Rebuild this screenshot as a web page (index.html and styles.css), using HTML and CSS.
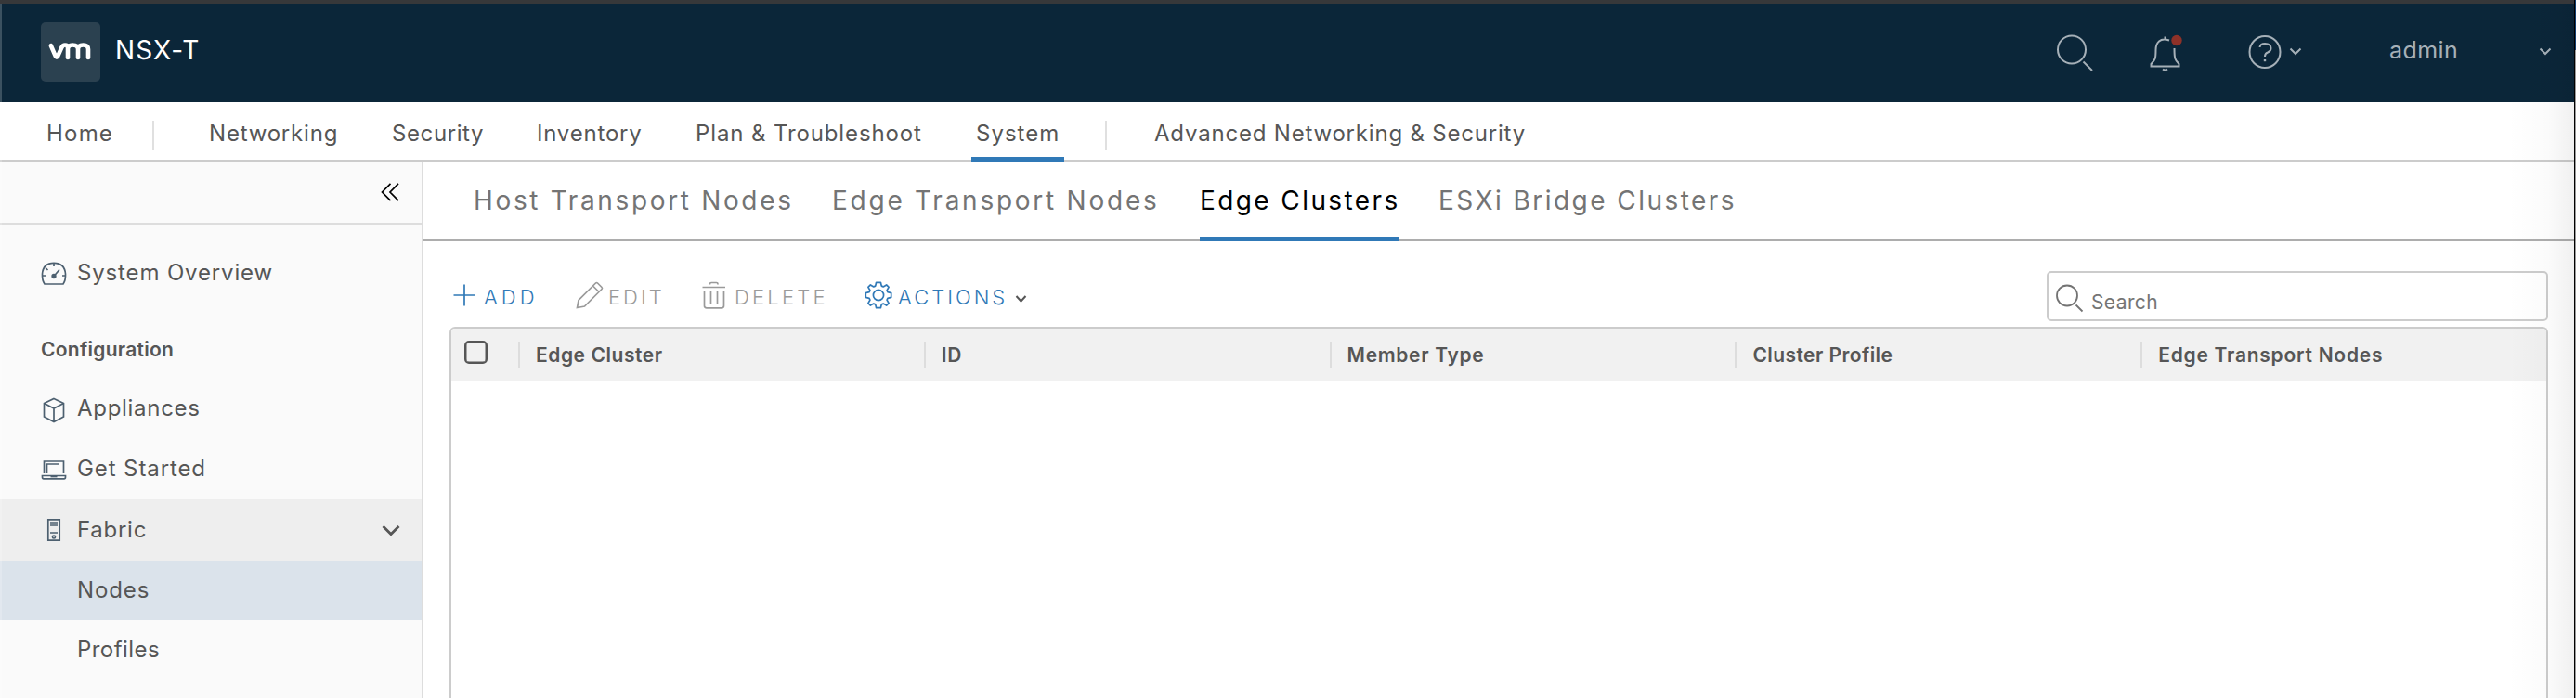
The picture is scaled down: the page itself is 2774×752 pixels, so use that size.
FILE: index.html
```html
<!DOCTYPE html>
<html lang="en">
<head>
<meta charset="utf-8">
<title>NSX-T</title>
<link rel="stylesheet" href="styles.css">
</head>
<body>
<div class="window">
  <header class="topbar">
    <div class="logo"><svg width="46" height="20" viewBox="0 0 46 20" fill="none" stroke="#fff" stroke-width="4.6" stroke-linecap="round" stroke-linejoin="round"><path d="M2.8 3.2L7.6 14.2Q9 17 10.4 14.2L14.2 5.5Q15.500 2.500 18 2.500Q21 2.500 21 6V16M21 6.500Q21 2.500 26 2.500Q32 2.500 32 7V16M32 7Q32 2.500 37.500 2.500Q43 2.500 43 7V16"/></svg></div>
    <span class="product">NSX-T</span>
    <div class="tools">
      <svg class="t-search" width="42" height="42" viewBox="0 0 42 42"><circle cx="17" cy="16.500" r="15"/><path d="M29.500 29.500L39 39"/></svg>
      <svg class="t-bell" width="38" height="42" viewBox="0 0 38 42"><path d="M17.500 5.500V2.500M22 6.500C12 3 7.500 9 7.500 17C7.500 26 7 27.500 2.500 32V34.500H32.500V32C28 27.500 27.500 26 27.500 15"/><path d="M15 37.500Q17.500 39.500 20 37.500"/><circle class="dot" cx="30" cy="6.500" r="5.700"/></svg>
      <svg class="t-help" width="38" height="38" viewBox="0 0 38 38"><ellipse cx="19" cy="19" rx="16.500" ry="17"/><path d="M13.500 14Q14 10 19 10Q25.500 10 25.500 15Q25.500 18 22 19.500Q19 20.500 19 24"/><path d="M19 27v2.200" stroke-width="2.400"/></svg>
      <svg class="t-chev" width="14" height="9" viewBox="0 0 14 9"><path d="M1.500 1.500L7 7L12.500 1.500"/></svg>
      <span class="user">admin</span>
      <svg class="t-chev" width="14" height="9" viewBox="0 0 14 9"><path d="M1.500 1.500L7 7L12.500 1.500"/></svg>
    </div>
  </header>
  <nav class="nav">
    <a class="n-home">Home</a>
    <i class="rule"></i>
    <a class="n-net">Networking</a>
    <a class="n-sec">Security</a>
    <a class="n-inv">Inventory</a>
    <a class="n-plan">Plan &amp; Troubleshoot</a>
    <a class="n-sys active">System</a>
    <i class="rule"></i>
    <a class="n-adv">Advanced Networking &amp; Security</a>
  </nav>
  <div class="body">
    <aside class="sidebar">
      <div class="collapse"><svg width="20" height="20" viewBox="0 0 20 20" fill="none" stroke="#000" stroke-width="1.700"><path d="M10.500 .8L1.500 10L10.500 19.200M19 .8L10 10L19 19.200"/></svg></div>
      <div class="item overview"><span class="ico"><svg width="28" height="26" viewBox="0 0 28 26"><path d="M4 24H24Q26.800 20 26.500 13Q25.500 1.300 14 1.300Q2.500 1.300 1.500 13Q1.200 20 4 24Z"/><path d="M14 1.500V5M1.500 15H5M23 15H26.500M5 6.500L7.500 9M14 15.500L20 8.500"/><circle cx="14" cy="15.500" r="1.800" fill="#4d6070"/></svg></span><span class="w-ov">System Overview</span></div>
      <div class="group">Configuration</div>
      <div class="item"><span class="ico"><svg width="24" height="28" viewBox="0 0 24 28"><path d="M12 1.500L22.500 6.500V21L12 26.500L1.500 21V6.500ZM1.500 6.500L12 12L22.500 6.500M12 12V26.500"/></svg></span><span class="w-app">Appliances</span></div>
      <div class="item started"><span class="ico"><svg width="28" height="22" viewBox="0 0 28 22"><path d="M3.500 15V2H24.500V15M6.500 15V5H19.500"/><path d="M1.500 17.500H26.500V19Q26.500 20.800 25 20.800H3Q1.500 20.800 1.500 19Z"/><path d="M10.500 18.500H17.500"/></svg></span><span class="w-get">Get Started</span></div>
      <div class="item fabric"><span class="ico"><svg width="16" height="26" viewBox="0 0 16 26"><path d="M1.800 1.800H14.200V24.200H1.800ZM4 5H12M4 8H12M4 16H12"/><circle cx="8" cy="20.500" r="1.500"/></svg></span><span class="w-fab">Fabric</span><svg class="chev" width="20" height="13" viewBox="0 0 20 13"><path d="M1.500 2L10 10.500L18.500 2"/></svg></div>
      <div class="item sub selected"><span class="w-nod">Nodes</span></div>
      <div class="item sub"><span class="w-pro">Profiles</span></div>
    </aside>
    <main class="main">
      <div class="tabs">
        <a class="tb-host">Host Transport Nodes</a>
        <a class="tb-edge">Edge Transport Nodes</a>
        <a class="tb-clus active">Edge Clusters</a>
        <a class="tb-esxi">ESXi Bridge Clusters</a>
      </div>
      <div class="toolbar">
        <a class="btn b-add"><svg width="24" height="24" viewBox="0 0 24 24"><path d="M12 .5V23.500M.5 12H23.500"/></svg><span>ADD</span></a>
        <a class="btn b-edit off"><svg width="30" height="30" viewBox="0 0 30 30"><path d="M1.500 28.500L3 20.500L21.500 2Q22.500 1 23.500 2L28 6.500Q29 7.500 28 8.500L9.500 27ZM18.500 5L25 11.500"/></svg><span>EDIT</span></a>
        <a class="btn b-del off"><svg width="26" height="30" viewBox="0 0 26 30"><path d="M.5 6.500H25M8.500 3.500V3Q8.500 1.500 10 1.500H15.500Q17 1.500 17 3V3.500M2.500 10V26.500Q2.500 28.800 5 28.800H21Q23.500 28.800 23.500 26.500V10M9.500 11V24M16.500 11V24"/></svg><span>DELETE</span></a>
        <a class="btn b-act"><svg width="30" height="30" viewBox="0 0 30 30"><circle cx="15" cy="15" r="5.600"/><path d="M12.600 1.300H17.400L18.300 5.100L20.200 5.900L23.600 3.900L26.100 6.400L24.100 9.800L24.900 11.700L28.700 12.600V17.400L24.900 18.300L24.100 20.200L26.100 23.600L23.600 26.100L20.200 24.100L18.300 24.900L17.400 28.700H12.600L11.700 24.900L9.800 24.100L6.400 26.100L3.900 23.600L5.900 20.200L5.100 18.300L1.300 17.400V12.600L5.100 11.700L5.900 9.800L3.900 6.400L6.400 3.900L9.800 5.900L11.700 5.100Z" stroke-linejoin="round"/></svg><span>ACTIONS</span><svg class="caret" width="13" height="10" viewBox="0 0 13 10"><path d="M1.500 2L6.500 7.500L11.500 2"/></svg></a>
        <div class="search"><svg width="30" height="30" viewBox="0 0 30 30"><circle cx="12" cy="12.500" r="11"/><path d="M21.500 22.500L28.500 29.500"/></svg><span>Search</span></div>
      </div>
      <div class="grid">
        <div class="head">
          <div class="check"><i></i></div>
          <div class="col"><span class="c1">Edge Cluster</span></div>
          <div class="col"><span class="c2">ID</span></div>
          <div class="col"><span class="c3">Member Type</span></div>
          <div class="col"><span class="c4">Cluster Profile</span></div>
          <div class="col"><span class="c5">Edge Transport Nodes</span></div>
        </div>
      </div>
    </main>
  </div>
</div>
<div class="edge-left"></div>
<div class="edge-shade"></div>
<div class="edge-right"></div>
</body>
</html>
```
FILE: styles.css
```css
* { box-sizing: border-box; }
html, body { margin: 0; height: 100%; overflow: hidden; }
body { font-family: Inter, "Liberation Sans", sans-serif; color: #565656; background: #fff; }
svg { display: block; flex: none; overflow: visible; }
a, span { white-space: nowrap; }

.window { display: flex; flex-direction: column; width: 2774px; height: 752px; }

.topbar { flex: none; display: flex; align-items: flex-start; height: 110px; background: #0b2639; border-top: 4px solid #37383a; padding-left: 44px; }
.logo { width: 64px; height: 64px; margin-top: 20px; border-radius: 5px; background: #2b4150; padding: 22px 0 0 8px; }
.product { margin: 35px 0 0 16px; color: #fff; font-size: 28px; line-height: 30px; letter-spacing: 1.1px; }
.tools { display: flex; margin-left: auto; padding-right: 26px; color: #a6b0b8; }
.tools svg { fill: none; stroke: #a6b0b8; stroke-width: 2; }
.t-search { margin-top: 33px; }
.t-bell { margin: 33px 0 0 58px; }
.tools .dot { fill: #8e3128; stroke: none; }
.t-help { margin: 33px 0 0 68px; }
.t-chev { margin: 47px 0 0 7px; }
.user { width: 161px; margin: 34px 0 0 94px; font-size: 25px; line-height: 32px; letter-spacing: .4px; }
.user + .t-chev { margin-left: 0; }

.nav { flex: none; display: flex; height: 64px; border-bottom: 2px solid #ccc; font-size: 24px; line-height: 67px; letter-spacing: .8px; }
.nav a { height: 64px; flex: none; }
.rule { width: 2px; height: 32px; margin-top: 20px; background: #e0e0e0; flex: none; }
.n-home { width: 164px; padding-left: 50px; letter-spacing: 1.2px; }
.n-net { width: 254px; padding-left: 59px; }
.n-sec { width: 157px; padding-left: 2px; letter-spacing: .6px; }
.n-inv { width: 171px; padding-left: 1px; }
.n-plan { width: 299px; padding-left: 1px; letter-spacing: .88px; }
.n-sys { width: 100px; padding-left: 5px; margin-right: 44px; margin-left: -1px; letter-spacing: 1px; }
.nav .active { box-shadow: inset 0 -5px #3079b7; }
.n-adv { padding-left: 51px; }

.body { flex: 1; display: flex; min-height: 0; }
.sidebar { flex: none; width: 456px; background: #fafafa; border-right: 2px solid #ddd; font-size: 24px; letter-spacing: .9px; }
.collapse { height: 68px; border-bottom: 2px solid #ddd; padding: 23px 0 0 410px; }
.item { display: flex; align-items: center; height: 64px; line-height: 64px; }
.ico { width: 28px; margin: 3px 11px 0 44px; display: flex; justify-content: center; }
.ico svg { fill: none; stroke: #4d6070; stroke-width: 1.700; }
.overview { margin-top: 19px; }
.w-ov { margin-top: 2px; letter-spacing: .85px; }
.group { margin-top: 19px; height: 64px; font-size: 21px; font-weight: 600; line-height: 66px; padding-left: 44px; letter-spacing: .27px; }
.w-app { letter-spacing: .7px; }
.started { height: 66px; }
.started .ico { margin-top: 1px; }
.fabric { height: 66px; background: #eee; letter-spacing: .73px; }
.fabric .ico { margin-top: 0; }
.chev { margin-left: auto; margin-right: 23px; fill: none; stroke: #565656; stroke-width: 2.800; }
.sub { padding-left: 83px; }
.w-pro { letter-spacing: .45px; }
.selected { background: #dbe3eb; }

.main { flex: 1; display: flex; flex-direction: column; min-width: 0; }
.tabs { flex: none; display: flex; height: 86px; border-bottom: 2px solid #adadad; padding-left: 54px; font-size: 28px; line-height: 85px; color: #747474; }
.tabs a { height: 86px; flex: none; }
.tb-host { width: 386px; letter-spacing: 2.65px; }
.tb-edge { width: 396px; letter-spacing: 2.75px; }
.tb-clus { width: 214px; letter-spacing: 2.4px; }
.tb-esxi { margin-left: 43px; letter-spacing: 2.45px; }
.tabs .active { color: #000; box-shadow: inset 0 -5px #3079b7; }

.toolbar { flex: none; display: flex; height: 92px; padding: 32px 30px 0 32px; font-size: 22px; font-weight: 300; line-height: 30px; }
.btn { display: flex; height: 30px; margin-top: 11px; color: #3079b7; letter-spacing: 3px; flex: none; }
.btn svg { fill: none; stroke: currentColor; stroke-width: 1.700; }
.btn span { margin-top: 2px; }
.off { color: #9a9a9a; }
.b-add { width: 132px; letter-spacing: 4px; }
.b-add svg { margin-top: 3px; }
.b-add span { margin-left: 9px; }
.b-edit { width: 137px; }
.b-edit span { margin-left: 5px; }
.b-del { width: 174px; letter-spacing: 3.2px; }
.b-del svg { margin-left: -1px; }
.b-del span { margin-left: 9px; }
.b-act span { width: 120px; margin-left: 6px; }
.btn .caret { margin: 14px 0 0 6px; stroke: #565656; stroke-width: 2; }
.search { display: flex; width: 540px; height: 54px; margin-left: auto; border: 2px solid #ccc; border-radius: 5px; padding: 12px 0 0 8px; font-size: 21px; color: #757575; font-weight: 400; }
.search svg { fill: none; stroke: #737373; stroke-width: 1.800; }
.search span { margin: 5px 0 0 8px; letter-spacing: .4px; }

.grid { flex: 1; margin: 0 30px 0 28px; border: 2px solid #ccc; border-bottom: 0; border-radius: 6px 6px 0 0; }
.head { display: flex; height: 56px; background: #f1f1f1; border-radius: 4px 4px 0 0; font-size: 21px; font-weight: 600; line-height: 30px; }
.check { width: 72px; padding: 13px 0 0 14px; flex: none; }
.check i { display: block; width: 25px; height: 25px; border: 2.500px solid #565656; border-radius: 5px; box-shadow: inset 0 0 0 .5px #565656; }
.col { flex: 1; height: 28px; margin-top: 14px; border-left: 2px solid #ddd; padding-left: 17px; letter-spacing: .55px; }
.c3 { letter-spacing: .68px; }
.c4 { letter-spacing: .43px; }
.c5 { letter-spacing: .75px; }

.edge-left { position: absolute; left: 0; top: 4px; width: 2px; height: 748px; background: rgba(255,255,255,.2); }
.edge-shade { position: absolute; right: 2px; top: 4px; width: 72px; height: 748px; background: linear-gradient(to right, rgba(0,0,0,0), rgba(0,0,0,.015) 60%, rgba(0,0,0,.06)); }
.edge-right { position: absolute; right: 0; top: 0; width: 2px; height: 752px; border-left: 1px solid #000; background: linear-gradient(#123f70 54px, #9a9a9a 54px); }
```
